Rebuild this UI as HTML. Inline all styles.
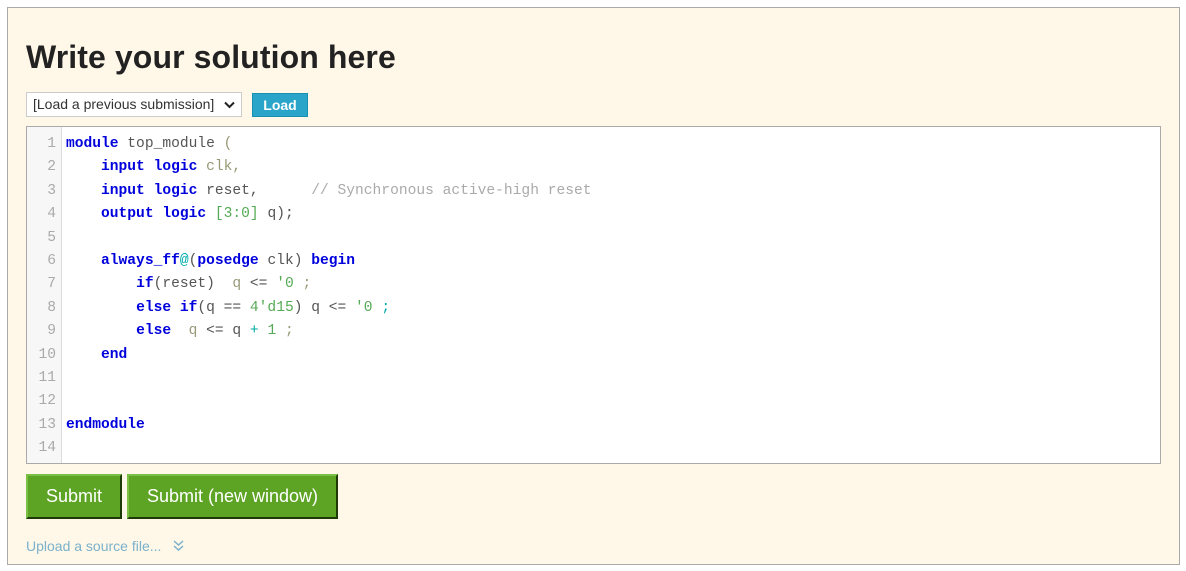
<!DOCTYPE html>
<html><head><style>
body{margin:0;background:#fff;font-family:"Liberation Sans",sans-serif;}
.panel{position:absolute;left:7px;top:7px;width:1171px;height:556px;background:#fff7e7;border:1px solid #aaa;}
h1{position:absolute;left:18px;top:31px;margin:0;font-size:32px;letter-spacing:0.1px;font-weight:bold;color:#222;}
.sel{position:absolute;left:18px;top:84px;width:216px;height:25px;background:#fff;border:1px solid #ccc;box-sizing:border-box;font-size:14px;color:#333;line-height:23px;padding-left:6px;}
.sel svg{position:absolute;right:6px;top:8px;}
.load{position:absolute;left:244px;top:85px;width:56px;height:24px;background:#2aa5c9;border:1px solid #1b8fb2;box-sizing:border-box;color:#fff;font-weight:bold;font-size:14px;text-align:center;line-height:22px;}
.ed{position:absolute;left:18px;top:118px;width:1135px;height:338px;background:#fff;border:1px solid #aaa;box-sizing:border-box;overflow:hidden;}
.gut{position:absolute;left:0;top:0;width:34px;height:100%;background:#f7f7f7;border-right:1px solid #ddd;}
pre{margin:0;position:absolute;top:6px;font-family:"Liberation Mono",monospace;font-size:14.6px;line-height:23.4px;}
.ln{left:0;width:29px;text-align:right;color:#aaa;}
.code{left:39px;color:#555;}
.k{color:#0000dd;font-weight:bold;}
.c{color:#aaa;}
.n{color:#5a5;}
.p{color:#997;}
.o{color:#0aa;}
.btn{position:absolute;top:466px;height:45px;background:#5ea424;border:2px solid #1d3a08;border-top-color:#7bbf45;border-left-color:#7bbf45;box-sizing:border-box;color:#fff;font-size:18px;text-align:center;line-height:41px;}
.up{position:absolute;left:18px;top:530px;font-size:14px;color:#7ab1cc;}
</style></head><body>
<div class="panel">
<h1>Write your solution here</h1>
<div class="sel">[Load a previous submission]<svg width="11" height="8" viewBox="0 0 11 8"><path d="M1 1.5L5.5 6L10 1.5" stroke="#222" stroke-width="2" fill="none"/></svg></div>
<div class="load">Load</div>
<div class="ed"><div class="gut"></div>
<pre class="ln">1
2
3
4
5
6
7
8
9
10
11
12
13
14</pre>
<pre class="code"><span class="k">module</span> top_module <span class="p">(</span>
    <span class="k">input</span> <span class="k">logic</span> <span class="p">clk,</span>
    <span class="k">input</span> <span class="k">logic</span> reset,      <span class="c">// Synchronous active-high reset</span>
    <span class="k">output</span> <span class="k">logic</span> <span class="n">[3:0]</span> q);

    <span class="k">always_ff</span><span class="o">@</span>(<span class="k">posedge</span> clk) <span class="k">begin</span>
        <span class="k">if</span>(reset)  <span class="p">q</span> &lt;= <span class="n">'0</span> <span class="p">;</span>
        <span class="k">else</span> <span class="k">if</span>(q == <span class="n">4'd15</span>) q &lt;= <span class="n">'0</span> <span class="o">;</span>
        <span class="k">else</span>  <span class="p">q</span> &lt;= q <span class="o">+</span> <span class="n">1</span> <span class="p">;</span>
    <span class="k">end</span>


<span class="k">endmodule</span>
</pre></div>
<div class="btn" style="left:18px;width:96px">Submit</div>
<div class="btn" style="left:119px;width:211px">Submit (new window)</div>
<div class="up">Upload a source file... &nbsp;&nbsp;<svg width="11" height="11" viewBox="0 0 11 11"><path d="M1 1L5.5 5L10 1M1 6L5.5 10L10 6" stroke="#7ab1cc" stroke-width="1.5" fill="none"/></svg></div>
</div>
</body></html>
